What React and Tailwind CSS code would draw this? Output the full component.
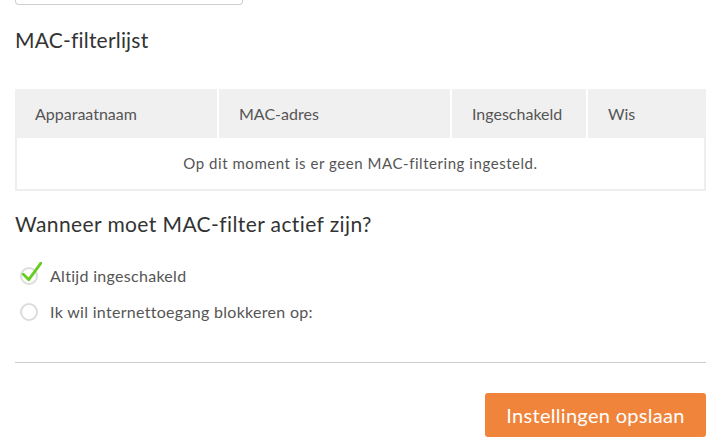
import React from 'react';

const columns = [
  { label: 'Apparaatnaam', className: 'w-[204px]' },
  { label: 'MAC-adres', className: 'w-[233px]' },
  { label: 'Ingeschakeld', className: 'w-[136px]' },
  { label: 'Wis', className: 'flex-1' },
];

function Radio({ checked, label }) {
  return (
    <label className="flex items-center gap-[12px] h-[24px]">
      <span className="relative w-[18px] h-[18px] ml-[5px] rounded-full border-2 border-[#dcdcdc] bg-white">
        {checked && (
          <svg viewBox="0 0 20 20" className="absolute -left-[2px] -top-[9px] w-[22px] h-[24px]">
            <path d="M3 12 L8 17 L19 2" fill="none" stroke="#66cc22" strokeWidth="2.6" strokeLinecap="round" strokeLinejoin="round" />
          </svg>
        )}
      </span>
      <span className="text-[16px] text-[#555] tracking-[0.3px]">{label}</span>
    </label>
  );
}

export default function App() {
  return (
    <div className="w-[727px] h-[445px] bg-white px-[15px] overflow-hidden" style={{ fontFamily: 'Lato, "Open Sans", sans-serif' }}>
      <div className="w-[228px] h-[5px] border border-t-0 border-[#cfcfcf] rounded-b-[4px]" />

      <h2 className="mt-[22px] text-[21px] leading-[26px] text-[#333] tracking-[0.2px]">MAC-filterlijst</h2>

      <div className="mt-[36px] w-[691px] border-2 border-t-0 border-[#eeeeef]">
        <div className="flex h-[49px] bg-[#f0f0f0] -mx-[2px] text-[16px] text-[#555]">
          {columns.map((c, i) => (
            <div
              key={c.label}
              className={`${c.className} flex items-center pl-[20px] ${i < columns.length - 1 ? 'border-r-2 border-white' : ''}`}
            >
              {c.label}
            </div>
          ))}
        </div>
        <div className="h-[51px] flex items-center justify-center text-[15px] text-[#555] tracking-[0.55px]">
          Op dit moment is er geen MAC-filtering ingesteld.
        </div>
      </div>

      <h2 className="mt-[20px] text-[21px] leading-[26px] text-[#333] tracking-[0.4px]">Wanneer moet MAC-filter actief zijn?</h2>

      <div className="mt-[27px] flex flex-col gap-[12px]">
        <Radio checked label="Altijd ingeschakeld" />
        <Radio label="Ik wil internettoegang blokkeren op:" />
      </div>

      <div className="mt-[38px] w-[691px] h-px bg-[#cccccc]" />

      <div className="mt-[30px] flex justify-end w-[691px]">
        <button className="w-[221px] h-[44px] rounded-[3px] bg-[#f0843b] text-white text-[20px] tracking-[0.3px]">
          Instellingen opslaan
        </button>
      </div>
    </div>
  );
}
